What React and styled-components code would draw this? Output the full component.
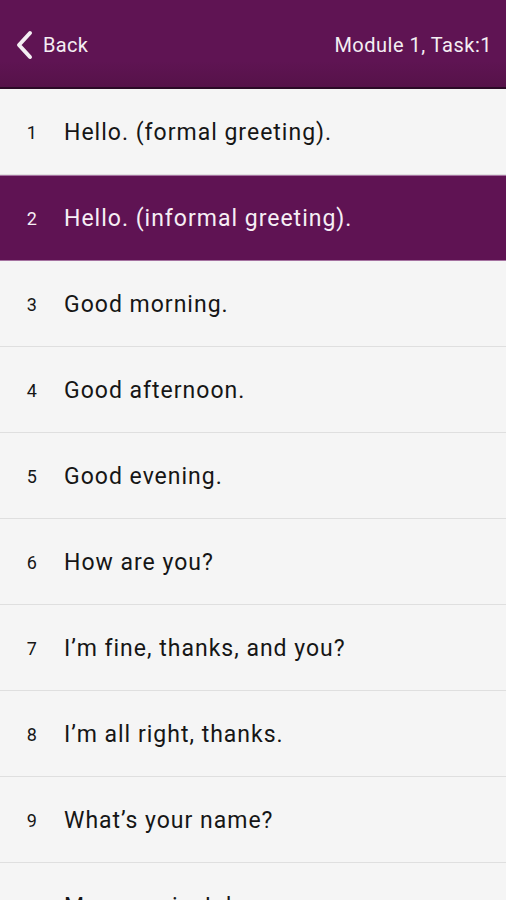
import React from 'react';
import styled, { createGlobalStyle } from 'styled-components';

const Global = createGlobalStyle`
  body {
    margin: 0;
    background: #f5f5f5;
    font-family: Roboto, "Liberation Sans", sans-serif;
  }
`;

const Screen = styled.div`
  width: 506px;
  height: 900px;
  overflow: hidden;
  background: #f5f5f5;
`;

const Header = styled.header`
  height: 87px;
  display: flex;
  align-items: center;
  justify-content: space-between;
  padding: 0 14px 0 14px;
  background: linear-gradient(#5f1453 0%, #5f1453 70%, #561249 100%);
  border-bottom: 2px solid #2b0a26;
  color: #f4eef3;
`;

const BackButton = styled.div`
  display: flex;
  align-items: center;
  gap: 9px;
  font-size: 20px;
  letter-spacing: 0.3px;
  padding-top: 3px;
`;

const Title = styled.div`
  font-size: 20px;
  letter-spacing: 0.5px;
  padding-top: 3px;
`;

const List = styled.div`
  display: flex;
  flex-direction: column;
`;

const Row = styled.div`
  height: 86px;
  flex-shrink: 0;
  display: flex;
  align-items: center;
  padding-top: 2px;
  box-sizing: border-box;
  border-bottom: 1px solid ${p => (p.$active ? '#a572a0' : '#dfdfdf')};
  box-shadow: ${p => (p.$active ? 'inset 0 1px 0 #a572a0' : 'none')};
  background: ${p => (p.$active ? '#5f1353' : '#f5f5f5')};
  color: ${p => (p.$active ? '#f6eef5' : '#161616')};
`;

const Num = styled.span`
  width: 64px;
  text-align: center;
  font-size: 18px;
  letter-spacing: 0.5px;
`;

const Phrase = styled.span`
  font-size: 23px;
  letter-spacing: 1px;
`;

const items = [
  'Hello. (formal greeting).',
  'Hello. (informal greeting).',
  'Good morning.',
  'Good afternoon.',
  'Good evening.',
  'How are you?',
  'I\u2019m fine, thanks, and you?',
  'I\u2019m all right, thanks.',
  'What\u2019s your name?',
  'My name is John.',
];

export default function App() {
  return (
    <Screen>
      <Global />
      <Header>
        <BackButton>
          <svg width="20" height="30" viewBox="0 0 20 30">
            <path d="M16 3 L5 15 L16 27" fill="none" stroke="#f4eef3" strokeWidth="4" strokeLinecap="round" strokeLinejoin="round" />
          </svg>
          Back
        </BackButton>
        <Title>Module 1, Task:1</Title>
      </Header>
      <List>
        {items.map((t, i) => (
          <Row key={i} $active={i === 1}>
            <Num>{i + 1}</Num>
            <Phrase>{t}</Phrase>
          </Row>
        ))}
      </List>
    </Screen>
  );
}
